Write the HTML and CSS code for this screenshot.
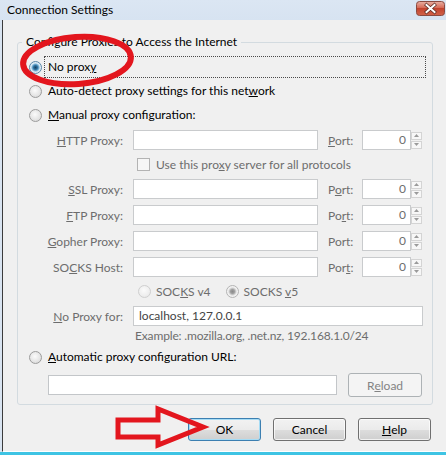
FILE: index.html
```html
<!DOCTYPE html>
<html>
<head>
<meta charset="utf-8">
<title>Connection Settings</title>
<link rel="stylesheet" href="styles.css">
</head>
<body>
<div class="window">
  <div class="titlebar">
    <span class="title">Connection Settings</span>
    <span class="close">
      <svg width="29" height="15" viewBox="0 0 29 15">
        <defs>
          <linearGradient id="cg" x1="0" y1="0" x2="0" y2="1">
            <stop offset="0" stop-color="#e8b0a4"/>
            <stop offset="0.45" stop-color="#d66a56"/>
            <stop offset="0.5" stop-color="#c2432e"/>
            <stop offset="1" stop-color="#d2634a"/>
          </linearGradient>
        </defs>
        <rect x="0.5" y="0.5" width="28" height="14" rx="3" fill="url(#cg)" stroke="#8a4a40"/>
        <path d="M10.5 4 L18.5 11 M18.5 4 L10.5 11" stroke="#5a2a22" stroke-width="3.4" stroke-linecap="square"/>
        <path d="M10.5 4 L18.5 11 M18.5 4 L10.5 11" stroke="#ffffff" stroke-width="2" stroke-linecap="square"/>
      </svg>
    </span>
  </div>
  <div class="client">
    <fieldset class="group">
      <legend>Configure Proxies to Access the Internet</legend>

      <div class="opt-row">
        <span class="radio checked"></span>
        <span class="opt-label focus">No prox<u>y</u></span>
      </div>
      <div class="opt-row">
        <span class="radio"></span>
        <span class="opt-label">Auto-detect proxy settings for this net<u>w</u>ork</span>
      </div>
      <div class="opt-row">
        <span class="radio"></span>
        <span class="opt-label"><u>M</u>anual proxy configuration:</span>
      </div>

      <div class="field-row first">
        <span class="flabel"><u>H</u>TTP Proxy:</span>
        <span class="textbox host"></span>
        <span class="plabel"><u>P</u>ort:</span>
        <span class="textbox pbox">0</span>
        <span class="spin"><span class="spin-btn"><svg width="5" height="3" viewBox="0 0 5 3"><path d="M0 3 L2.5 0 L5 3 Z" fill="#9a9a9a"/></svg></span><span class="spin-btn"><svg width="5" height="3" viewBox="0 0 5 3"><path d="M0 0 L2.5 3 L5 0 Z" fill="#9a9a9a"/></svg></span></span>
      </div>
      <div class="check-row">
        <span class="checkbox"></span>
        <span class="dim">Use this pro<u>x</u>y server for all protocols</span>
      </div>
      <div class="field-row tight">
        <span class="flabel"><u>S</u>SL Proxy:</span>
        <span class="textbox host"></span>
        <span class="plabel">P<u>o</u>rt:</span>
        <span class="textbox pbox">0</span>
        <span class="spin"><span class="spin-btn"><svg width="5" height="3" viewBox="0 0 5 3"><path d="M0 3 L2.5 0 L5 3 Z" fill="#9a9a9a"/></svg></span><span class="spin-btn"><svg width="5" height="3" viewBox="0 0 5 3"><path d="M0 0 L2.5 3 L5 0 Z" fill="#9a9a9a"/></svg></span></span>
      </div>
      <div class="field-row">
        <span class="flabel"><u>F</u>TP Proxy:</span>
        <span class="textbox host"></span>
        <span class="plabel">Po<u>r</u>t:</span>
        <span class="textbox pbox">0</span>
        <span class="spin"><span class="spin-btn"><svg width="5" height="3" viewBox="0 0 5 3"><path d="M0 3 L2.5 0 L5 3 Z" fill="#9a9a9a"/></svg></span><span class="spin-btn"><svg width="5" height="3" viewBox="0 0 5 3"><path d="M0 0 L2.5 3 L5 0 Z" fill="#9a9a9a"/></svg></span></span>
      </div>
      <div class="field-row">
        <span class="flabel"><u>G</u>opher Proxy:</span>
        <span class="textbox host"></span>
        <span class="plabel">Port:</span>
        <span class="textbox pbox">0</span>
        <span class="spin"><span class="spin-btn"><svg width="5" height="3" viewBox="0 0 5 3"><path d="M0 3 L2.5 0 L5 3 Z" fill="#9a9a9a"/></svg></span><span class="spin-btn"><svg width="5" height="3" viewBox="0 0 5 3"><path d="M0 0 L2.5 3 L5 0 Z" fill="#9a9a9a"/></svg></span></span>
      </div>
      <div class="field-row">
        <span class="flabel">SO<u>C</u>KS Host:</span>
        <span class="textbox host"></span>
        <span class="plabel">Por<u>t</u>:</span>
        <span class="textbox pbox">0</span>
        <span class="spin"><span class="spin-btn"><svg width="5" height="3" viewBox="0 0 5 3"><path d="M0 3 L2.5 0 L5 3 Z" fill="#9a9a9a"/></svg></span><span class="spin-btn"><svg width="5" height="3" viewBox="0 0 5 3"><path d="M0 0 L2.5 3 L5 0 Z" fill="#9a9a9a"/></svg></span></span>
      </div>
      <div class="version-row">
        <span class="radio dis"></span>
        <span class="dim v-label">SOC<u>K</u>S v4</span>
        <span class="radio dis-checked"></span>
        <span class="dim v-label">SOCKS <u>v</u>5</span>
      </div>
      <div class="field-row tight">
        <span class="flabel"><u>N</u>o Proxy for:</span>
        <span class="textbox noproxy">localhost, 127.0.0.1</span>
      </div>
      <div class="example-row dim">Example: .mozilla.org, .net.nz, 192.168.1.0/24</div>
      <div class="opt-row auto">
        <span class="radio"></span>
        <span class="opt-label"><u>A</u>utomatic proxy configuration URL:</span>
      </div>
      <div class="url-row">
        <span class="textbox url"></span>
        <span class="btn disabled reload">R<u>e</u>load</span>
      </div>
    </fieldset>

    <div class="buttons">
      <span class="btn default">OK</span>
      <span class="btn">Cancel</span>
      <span class="btn"><u>H</u>elp</span>
    </div>
  </div>
  <div class="bottom-edge"></div>

  <svg class="mark-ellipse" width="126" height="66" viewBox="0 0 126 66">
    <ellipse cx="62" cy="32.5" rx="54" ry="23.5" transform="rotate(-4 62 32.5)" fill="none" stroke="#e3161e" stroke-width="6"/>
  </svg>
  <svg class="mark-arrow" width="100" height="52" viewBox="0 0 100 52">
    <path d="M8 18 L48 18 L48 7 L93 25 L48 43 L48 35 L8 35 Z" fill="none" stroke="#e3161e" stroke-width="5" stroke-linejoin="miter"/>
  </svg>
</div>
</body>
</html>
```

FILE: styles.css
```css
html, body {
  margin: 0;
  padding: 0;
}

body {
  font-family: "Lato", "Liberation Sans", sans-serif;
  font-size: 12px;
  color: #000;
  background: #f0f0f0;
}

.window {
  position: relative;
  width: 446px;
  height: 455px;
  background: #d9e4f1;
  display: flex;
  flex-direction: column;
  overflow: hidden;
}

.titlebar {
  height: 20px;
  flex: none;
  display: flex;
  align-items: flex-start;
  background: linear-gradient(#dbe6f3, #d7e3f1);
}

.title {
  line-height: 20px;
  padding-left: 7px;
  font-size: 12px;
  color: #000;
}

.close {
  margin-left: auto;
  margin-top: 1px;
  margin-right: 1px;
  height: 15px;
}

.close svg {
  display: block;
}

.client {
  flex: 1;
  margin-left: 2px;
  border-left: 1px solid #3c3c3c;
  border-bottom: 1px solid #ffffff;
  background: #f0f0f0;
  display: flex;
  flex-direction: column;
}

.bottom-edge {
  height: 3px;
  flex: none;
  background: #3ec4e4;
}

.group {
  margin: 14px 0 0 14px;
  width: 416px;
  box-sizing: border-box;
  border: 1px solid #d3dbe0;
  border-radius: 3px;
  padding: 5px 6px 7px 11px;
  min-width: 0;
}

.group legend {
  margin-left: -7px;
  padding: 0 4px;
  line-height: 16px;
  color: #000;
}

u {
  text-decoration: underline;
  text-underline-offset: 1px;
}

.dim {
  color: #6d6d6d;
}

/* radio option rows */
.opt-row {
  display: flex;
  align-items: center;
  height: 24px;
}

.opt-row.auto {
  height: 22px;
}

.opt-label {
  flex: 1;
  margin-left: 2px;
  padding-left: 3px;
  line-height: 20px;
  border: 1px dotted transparent;
}

.opt-label.focus {
  border-color: #4a4a4a;
}

.radio {
  flex: none;
  width: 13px;
  height: 13px;
  box-sizing: border-box;
  border-radius: 50%;
  border: 1px solid #9c9c9c;
  background: radial-gradient(circle at 45% 40%, #fbfbfb 0, #e6e6e6 55%, #d2d2d2 100%);
}

.radio.checked {
  border-color: #5a87a8;
  background: radial-gradient(circle, #173f5f 0, #2c6f9c 2px, #7fb6da 3.5px, #dbe9f3 4.5px, #f3f7fa 100%);
}

.radio.dis {
  border-color: #cfcfcf;
  background: radial-gradient(circle at 45% 40%, #fbfbfb 0, #eeeeee 60%, #e3e3e3 100%);
}

.radio.dis-checked {
  border-color: #b4b4b4;
  background: radial-gradient(circle, #8a8a8a 0, #9e9e9e 2px, #d4d4d4 3.5px, #f1f1f1 4.5px, #f6f6f6 100%);
}

/* proxy field rows */
.field-row {
  display: flex;
  align-items: center;
  height: 20px;
  margin-top: 6px;
}

.field-row.first {
  margin-top: 3px;
}

.field-row.tight {
  margin-top: 0;
}

.flabel {
  flex: none;
  width: 94px;
  margin-right: 10px;
  text-align: right;
  color: #6d6d6d;
  white-space: nowrap;
}

.plabel {
  flex: none;
  width: 34px;
  margin-left: 10px;
  color: #6d6d6d;
}

.textbox {
  flex: none;
  height: 20px;
  box-sizing: border-box;
  border: 1px solid #c9cbcd;
  background: #ffffff;
  line-height: 18px;
  color: #6d6d6d;
  white-space: nowrap;
}

.host {
  width: 185px;
}

.pbox {
  width: 49px;
  text-align: right;
  padding-right: 4px;
}

.spin {
  flex: none;
  width: 11px;
  height: 20px;
  display: flex;
  flex-direction: column;
  justify-content: center;
  gap: 1px;
}

.spin-btn {
  height: 8px;
  box-sizing: border-box;
  border: 1px solid #d4d4d4;
  background: #f7f7f7;
  display: flex;
  align-items: center;
  justify-content: center;
}

.spin-btn svg {
  display: block;
}

.check-row {
  display: flex;
  align-items: center;
  height: 29px;
  padding-left: 108px;
}

.checkbox {
  flex: none;
  width: 13px;
  height: 13px;
  box-sizing: border-box;
  border: 1px solid #b3b3b3;
  background: #f6f6f6;
  margin-right: 6px;
}

.version-row {
  display: flex;
  align-items: center;
  height: 29px;
  padding-left: 109px;
}

.v-label {
  margin-left: 5px;
  margin-right: 15px;
}

.noproxy {
  width: 290px;
  padding-left: 5px;
  color: #444;
}

.example-row {
  height: 20px;
  line-height: 20px;
  padding-left: 106px;
  letter-spacing: -0.15px;
}

.url-row {
  display: flex;
  align-items: center;
  height: 24px;
  margin-top: 5px;
  padding-left: 19px;
}

.url {
  width: 289px;
  border-color: #c3c6c9;
}

/* buttons */
.btn {
  flex: none;
  width: 73px;
  height: 23px;
  box-sizing: border-box;
  border: 1px solid #707070;
  border-radius: 3px;
  background: linear-gradient(#f2f2f2 0, #ebebeb 50%, #dddddd 51%, #cfcfcf 100%);
  display: flex;
  align-items: center;
  justify-content: center;
  color: #000;
  box-shadow: inset 0 0 0 1px rgba(255, 255, 255, 0.7);
}

.btn.default {
  border-color: #3c7fb1;
  box-shadow: inset 0 0 0 1px #a6dcf5;
}

.btn.disabled {
  border-color: #adb2b5;
  background: #f4f4f4;
  color: #838383;
  box-shadow: none;
}

.reload {
  width: 74px;
  height: 24px;
  margin-left: 11px;
}

.buttons {
  display: flex;
  justify-content: flex-end;
  gap: 12px;
  margin-top: 13px;
  padding-right: 15px;
}

/* annotation overlays */
.mark-ellipse {
  position: absolute;
  left: 15px;
  top: 28px;
}

.mark-arrow {
  position: absolute;
  left: 110px;
  top: 402px;
}
```
